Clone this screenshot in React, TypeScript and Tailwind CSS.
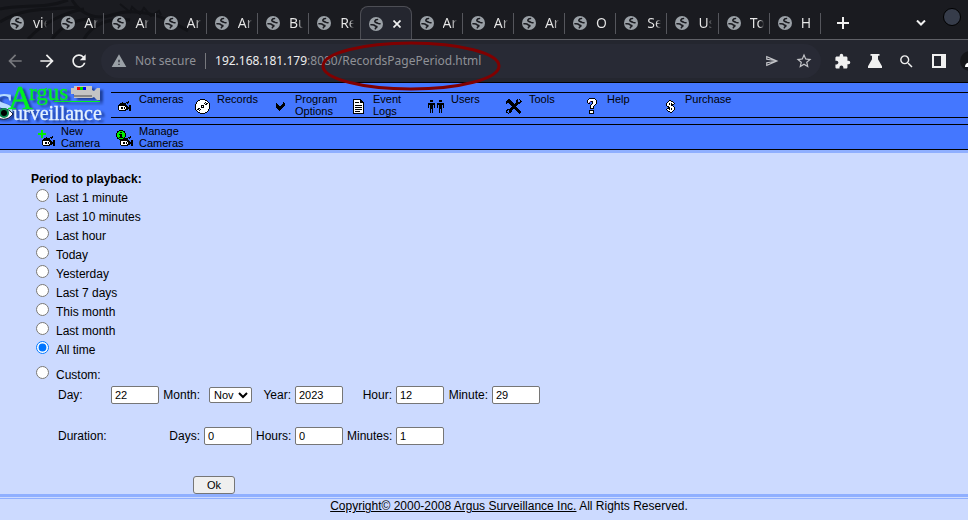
import { useState, type ReactNode } from "react";
import {
  MdArrowBack,
  MdArrowForward,
  MdExtension,
  MdOutlineSend,
  MdRefresh,
  MdSearch,
  MdStarBorder,
  MdWarning,
} from "react-icons/md";

const tabs = ["vie", "Ar", "Ar", "Ar", "Ar", "Bu", "Re", "", "Ar", "Ar", "Ar", "O", "Se", "Us", "To", "H"];
const activeTab = 7;

function Globe() {
  return (
    <svg viewBox="0 0 14 14" className="size-[14px] shrink-0">
      <circle cx="7" cy="7" r="7" fill="#9aa0a6" />
      <g fill="none" stroke="#1a1b20" strokeLinecap="round" strokeLinejoin="round">
        <path d="M8.500 2.500C5.500 2.500 5 5.200 7.300 5.600c1.300.2 1.500 1.400 3.700 1.200" strokeWidth="1.600" />
        <path d="M2 7.800c2.200-.2 3.400.1 4 .9.500.7 2.300.4 1.800 1.300-.4.700-1.300.6-1.500 1.800" strokeWidth="1.600" />
      </g>
    </svg>
  );
}

function TabStrip() {
  return (
    <div className="relative flex h-10 items-end overflow-hidden border-b border-[#5f6066] bg-[#1a1b20] pl-[2px]">
      <svg viewBox="0 0 330 39" className="absolute left-0 top-0 h-[39px] w-[330px]" fill="none" stroke="#121317">
        <path d="M0 9C22 4 45 9 68 0M0 22C26 6 52 10 78 7M28 39C44 22 66 12 84 9M52 39C62 25 78 18 94 19" strokeWidth="3" />
        <path d="M72 0C82 16 98 20 112 15C134 7 162 14 188 31M84 39C94 22 112 18 130 20" strokeWidth="3" />
        <path d="M120 4l10 8 2-5 8 7 4-6 7 8 8-5 2 4" strokeWidth="2" />
      </svg>
      <div role="tablist" className="relative -mb-px grid h-[34px] min-w-0 flex-1 grid-cols-[repeat(16,minmax(0,1fr))]">
        {tabs.map((title, i) =>
          i === activeTab ? (
            <div
              key={i}
              role="tab"
              aria-selected="true"
              className="flex items-center justify-between rounded-t-lg border border-b-0 border-[#4d4e55] bg-[#24262f] pl-2 pr-[10px]"
            >
              <Globe />
              <button aria-label="Close tab" className="text-[#f0f0f0]">
                <svg viewBox="0 0 8 8" className="size-2" stroke="currentColor" strokeWidth="1.700">
                  <path d="M0.500 0.500l7 7M7.500 0.500l-7 7" />
                </svg>
              </button>
            </div>
          ) : (
            <div key={i} role="tab" aria-selected="false" className="flex items-center">
              <div className="flex h-[21px] min-w-0 flex-1 items-center pl-2">
                <Globe />
                <span className="ml-[9px] w-[14px] overflow-hidden whitespace-nowrap bg-linear-to-r from-[#e8e8e8] from-65% to-transparent bg-clip-text text-sm leading-5 text-transparent">
                  {title}
                </span>
              </div>
              <div className={i === activeTab - 1 ? "w-px" : "h-[21px] w-px bg-[#55565c]"} />
            </div>
          ),
        )}
      </div>
      <div className="relative flex h-full w-[147px] items-center text-[#f0f0f0]">
        <button aria-label="New tab" className="mt-[7px] ml-4">
          <svg viewBox="0 0 12 12" className="size-3" stroke="currentColor" strokeWidth="2">
            <path d="M6 0v12M0 6h12" />
          </svg>
        </button>
        <button aria-label="Search tabs" className="mt-[7px] ml-[67px]">
          <svg viewBox="0 0 10 6" className="h-[6px] w-[10px]" fill="none" stroke="currentColor" strokeWidth="2">
            <path d="M1 0.500l4 4 4-4" />
          </svg>
        </button>
        <button
          aria-label="Window menu"
          className="mb-[6px] ml-[17px] size-[18px] rounded-full border border-black bg-[#363c4a]"
        />
      </div>
    </div>
  );
}

function Toolbar() {
  return (
    <div className="flex h-[42px] items-center overflow-hidden bg-[#24262f] pl-[5px] text-[#f0f0f0]">
      <button aria-label="Back" className="text-[#77787d]">
        <MdArrowBack size={20} />
      </button>
      <button aria-label="Forward" className="ml-3">
        <MdArrowForward size={20} />
      </button>
      <button aria-label="Reload" className="ml-3">
        <MdRefresh size={20} />
      </button>
      <div className="ml-3 flex h-[34px] min-w-0 flex-1 items-center rounded-full bg-[#282a35] pl-[10px] pr-2 text-xs text-[#8f9197]">
        <MdWarning size={16} className="shrink-0 text-[#9aa0a6]" />
        <span className="ml-2 whitespace-nowrap">Not secure</span>
        <span className="mx-[9px] h-4 w-px shrink-0 bg-[#77787d]" />
        <span className="flex-1 whitespace-nowrap">
          <span className="text-[#eeeeee]">192.168.181.179</span>:8080/RecordsPagePeriod.html
        </span>
        <button aria-label="Share" className="text-[#c4c5c9]">
          <MdOutlineSend size={14} />
        </button>
        <button aria-label="Bookmark" className="ml-4 text-[#c4c5c9]">
          <MdStarBorder size={18} />
        </button>
      </div>
      <div className="flex w-[147px] shrink-0 items-center">
        <button aria-label="Extensions" className="ml-[13px]">
          <MdExtension size={17} />
        </button>
        <button aria-label="Labs" className="ml-[17px]">
          <svg viewBox="0 0 14 14" className="size-[14px]" fill="currentColor">
            <path d="M2.500 0h9v1.800H10v3.400l4 7V14H0v-1.800l4-7V1.800H2.500z" />
          </svg>
        </button>
        <button aria-label="Find" className="ml-4">
          <MdSearch size={17} />
        </button>
        <button aria-label="Side panel" className="ml-[17px]">
          <svg viewBox="0 0 14 14" className="size-[14px]" fill="currentColor">
            <path fillRule="evenodd" d="M0 0h14v14H0zM2 2v10h7V2z" />
          </svg>
        </button>
        <button aria-label="Profile" className="ml-[14px] size-5 shrink-0 overflow-hidden rounded-full bg-[#15161a]">
          <svg viewBox="0 0 20 20" className="size-5">
            <path d="M5 16c0-4 3-4 5-5l6 5z" fill="#ffffff" />
          </svg>
        </button>
      </div>
    </div>
  );
}

const palette: Record<string, string> = { "#": "#000000", W: "#ffffff", G: "#00f000", P: "#7a2090" };

function PixelIcon({ rows }: { rows: string[] }) {
  const width = Math.max(...rows.map((r) => r.length));
  return (
    <svg
      viewBox={`0 0 ${width} ${rows.length}`}
      width={width}
      height={rows.length}
      shapeRendering="crispEdges"
      className="shrink-0"
    >
      {rows.flatMap((row, y) =>
        [...row].map((c, x) => (palette[c] ? <rect key={`${x}-${y}`} x={x} y={y} width="1" height="1" fill={palette[c]} /> : null)),
      )}
    </svg>
  );
}

const cameraIcon = [
  "..........#..",
  "....#...###..",
  "..######.#...",
  ".#######.....",
  "#########..##",
  "#WWWWWW###.##",
  "#WW##W#W#####",
  "#WW##W#W#####",
  "#WWWWWW###.##",
  ".#######...##",
];
const discIcon = [
  ".....#####.....",
  "...##WWWWW##...",
  "..#WWWWWWWWW#..",
  ".#WWWWWWWW#WW#.",
  ".#WWWWWWW#W##W#",
  "#WWWWWWWWW##WW#",
  "#WWWWW###WWWWW#",
  "#WWWWW#W#WWWWW#",
  "#WWWWW###WWWWW#",
  "#WW##WWWWWWWWW#",
  "#W##W#WWWWWWW#.",
  ".#WW#WWWWWWWW#.",
  "..#WWWWWWWWW#..",
  "...##WWWWW##...",
  ".....#####.....",
];
const checkIcon = [
  ".......#.",
  "#......##",
  "##....###",
  "###..####",
  "########.",
  "#######..",
  ".#####...",
  "..###....",
  "...#.....",
];
const documentIcon = [
  "########...",
  "#WWWWWW##..",
  "#WWWWWW###.",
  "#W####W####",
  "#WWWWWWWWW#",
  "#WWWWWWWWW#",
  "#W#######W#",
  "#WWWWWWWWW#",
  "#W#######W#",
  "#WWWWWWWWW#",
  "#W#######W#",
  "#WWWWWWWWW#",
  "#W#####WWW#",
  "#WWWWWWWWW#",
  "###########",
];
const usersIcon = [
  "..###....###..",
  "..###....###..",
  "..............",
  "#######..#######",
  "#######..#######",
  "#.###.#..#.###.#",
  "#.###.#..#.###.#",
  "#.###.#..#.###.#",
  "..###......###..",
  "..#.#......#.#..",
  "..#.#......#.#..",
  "..#.#......#.#..",
  "..#.#......#.#..",
].map((row, i) => (i < 2 ? "..###......###.." : row));

const toolsIcon = [
  "..##.......#.#..",
  ".####.....##..#.",
  "######....##..##",
  "#######...#####.",
  "#..#####.#####..",
  "....########....",
  ".....######.....",
  "......####......",
  ".....######.....",
  "....########....",
  ".######..####...",
  "##.###....####..",
  "#..###.....####.",
  "##.##.......###.",
  "..#..........#..",
];
const helpIcon = [
  "..######..",
  ".#WWWWWW#.",
  "#WWWWWWWW#",
  "#WWP##WWW#",
  "#WP..#WWW#",
  ".##..#WWW#",
  "....#WWW#.",
  "...#WWW#..",
  "...#WW#...",
  "...#WW#...",
  "...####...",
  "..........",
  "..#####...",
  "..#WWW#...",
  "..#WWW#...",
  "..#####...",
];
const dollarIcon = [
  "...##....",
  "..#WW##..",
  ".#WWWWW#.",
  "#WW#W#WW#",
  "#WW#W###.",
  "#WWWW##..",
  ".##WWWW#.",
  "..##WWWW#",
  ".###W#WW#",
  "#WW#W#WW#",
  ".#WWWWW#.",
  "..##WW#..",
  "....##...",
];
const newCameraIcon = [
  "...GG............",
  "...GG............",
  "...GG............",
  "GGGGGGGG.........",
  "GGGGGGGG.........",
  "...GG............",
  "...GG.........#..",
  "...GG...#...###..",
  "......######.#...",
  ".....#######.....",
  "....#########..##",
  "....#WWWWWW###.##",
  "....#WW##W#W#####",
  "....#WW##W#W#####",
  "....#WWWWWW###.##",
  ".....#######...##",
];
const manageCameraIcon = [
  "...####..........",
  ".##GGGG##........",
  ".#GG##GG#........",
  "#GGGGGGGG#.......",
  "#GG###GGG#.......",
  "#GGG##GGG#.......",
  "#GGG##GGG#....#..",
  ".#G####G#...###..",
  ".##GGGG#####.#...",
  "...#########.....",
  "....#########..##",
  "....#WWWWWW###.##",
  "....#WW##W#W#####",
  "....#WW##W#W#####",
  "....#WWWWWW###.##",
  ".....#######...##",
];

function NavItem({ icon, label }: { icon: string[]; label: string }) {
  return (
    <li className="w-[78px]">
      <a href="#" className="flex h-6 text-[11px] leading-3 text-black">
        <span className="flex w-7 shrink-0 items-center justify-center pt-0.5 pr-0.5">
          <PixelIcon rows={icon} />
        </span>
        <span className="w-[50px]">{label}</span>
      </a>
    </li>
  );
}

function Logo() {
  return (
    <svg viewBox="0 0 111 41" className="h-[41px] w-[111px] shrink-0 font-['Liberation_Serif',serif]" role="img" aria-label="Argus Surveillance">
      <g className="drop-shadow-[3px_2px_1px_#1d3f9c]">
        <text x="-7" y="36" fontSize="38" fontWeight="bold" fill="#b8dcff">S</text>
        <text x="8" y="26" fontSize="34" fill="#00f020" stroke="#00f020" strokeWidth="0.500">A</text>
        <text x="29" y="17" fontSize="23" fill="#00f020" stroke="#00f020" strokeWidth="0.300">rgus</text>
        <path d="M54 18.500h46" stroke="#00f020" />
        <text x="13" y="37" fontSize="20" fill="#e4f2ff" stroke="#e4f2ff" strokeWidth="0.300">urveillance</text>
        <path d="M71 5h3V3h18v4l2 1 3-3h3v12h-3l-3-3-2 1H74v-4h-3z" fill="#c4c4c4" />
      </g>
      <path d="M-6 31C-1 24 8 24 13 31C8 38-1 38-6 31z" fill="#ffffff" stroke="#0a1030" />
      <circle cx="4" cy="30" r="5" fill="#0b8a50" />
      <circle cx="4" cy="30" r="3" fill="#000000" />
      <path d="M74 12h18v2H74z" fill="#858585" />
      <path d="M77 4h3v3h-3z" fill="#ff0000" />
      <path d="M80 4h3v3h-3z" fill="#00e000" />
      <path d="M83 4h3v3h-3z" fill="#0000ff" />
    </svg>
  );
}

const mainNav = [
  { label: "Cameras", icon: cameraIcon },
  { label: "Records", icon: discIcon },
  { label: "Program Options", icon: checkIcon },
  { label: "Event Logs", icon: documentIcon },
  { label: "Users", icon: usersIcon },
  { label: "Tools", icon: toolsIcon },
  { label: "Help", icon: helpIcon },
  { label: "Purchase", icon: dollarIcon },
];

function Header() {
  return (
    <header className="border-t border-black bg-[#4477ff]">
      <div className="flex">
        <Logo />
        <nav className="mt-[9px] mb-[6px] flex-1 border-y border-black">
          <ul className="flex">
            {mainNav.map((item) => (
              <NavItem key={item.label} {...item} />
            ))}
          </ul>
        </nav>
      </div>
      <nav className="border-y border-black pl-[33px]">
        <ul className="flex">
          <NavItem icon={newCameraIcon} label="New Camera" />
          <NavItem icon={manageCameraIcon} label="Manage Cameras" />
        </ul>
      </nav>
    </header>
  );
}

const periods = [
  "Last 1 minute",
  "Last 10 minutes",
  "Last hour",
  "Today",
  "Yesterday",
  "Last 7 days",
  "This month",
  "Last month",
  "All time",
  "Custom:",
];

function NumberField({ id, value }: { id: string; value: string }) {
  return (
    <input
      id={id}
      type="text"
      defaultValue={value}
      className="h-[18px] w-12 rounded-[2px] border border-[#767676] bg-white px-[3px] text-[11px] leading-4 text-black"
    />
  );
}

function FieldLabel({ id, children }: { id: string; children: ReactNode }) {
  return (
    <label htmlFor={id} className="whitespace-nowrap text-right">
      {children}
    </label>
  );
}

function PeriodForm() {
  const [period, setPeriod] = useState("All time");
  return (
    <form className="pt-[17px] text-xs leading-[19px]" onSubmit={(e) => e.preventDefault()}>
      <fieldset>
        <legend className="pl-[31px] font-bold">Period to playback:</legend>
        {periods.map((p) => (
          <label key={p} className="flex pl-9 last:mt-[6px]">
            <input
              type="radio"
              name="period"
              checked={period === p}
              onChange={() => setPeriod(p)}
              className="mr-[7px] size-[13px]"
            />
            {p}
          </label>
        ))}
      </fieldset>
      <div className="mt-px ml-[58px] grid grid-cols-[49px_48px_37px_48px_35px_48px_45px_48px_40px_48px] gap-x-1 leading-[18px]">
        <label htmlFor="day">Day:</label>
        <NumberField id="day" value="22" />
        <FieldLabel id="month">Month:</FieldLabel>
        <select
          id="month"
          defaultValue="Nov"
          className="h-4 w-[43px] self-center justify-self-end rounded-[2px] border border-[#767676] bg-white text-[11px] leading-3 text-black"
        >
          {["Jan", "Feb", "Mar", "Apr", "May", "Jun", "Jul", "Aug", "Sep", "Oct", "Nov", "Dec"].map((m) => (
            <option key={m}>{m}</option>
          ))}
        </select>
        <FieldLabel id="year">Year:</FieldLabel>
        <NumberField id="year" value="2023" />
        <FieldLabel id="hour">Hour:</FieldLabel>
        <NumberField id="hour" value="12" />
        <FieldLabel id="minute">Minute:</FieldLabel>
        <NumberField id="minute" value="29" />
      </div>
      <div className="mt-[23px] ml-[58px] grid grid-cols-[49px_48px_37px_48px_35px_48px_45px_48px] gap-x-1 leading-[18px]">
        <span className="col-span-2">Duration:</span>
        <FieldLabel id="days">Days:</FieldLabel>
        <NumberField id="days" value="0" />
        <FieldLabel id="hours">Hours:</FieldLabel>
        <NumberField id="hours" value="0" />
        <FieldLabel id="minutes">Minutes:</FieldLabel>
        <NumberField id="minutes" value="1" />
      </div>
      <button
        type="submit"
        className="mt-[31px] ml-[193px] block h-[18px] w-[42px] rounded-[3px] border border-[#767676] bg-[#efefef] text-[11px] leading-4 text-black"
      >
        Ok
      </button>
    </form>
  );
}

export default function App() {
  return (
    <div className="relative min-h-screen overflow-hidden bg-[#ccdaff] font-['Liberation_Sans',Arial,sans-serif] text-black">
      <div className="font-['Noto_Sans',sans-serif]">
        <TabStrip />
        <Toolbar />
      </div>
      <Header />
      <main className="border-y-[3px] border-[#8fafff]">
        <PeriodForm />
      </main>
      <footer className="mt-px border-t border-[#8fafff] pl-[50px] text-center text-xs leading-[14px]">
        <a href="#" className="underline">
          Copyright© 2000-2008 Argus Surveillance Inc.
        </a>{" "}
        All Rights Reserved.
      </footer>
      <svg viewBox="0 0 180 50" className="pointer-events-none absolute left-[321px] top-[41px] h-[50px] w-[180px]" fill="none">
        <ellipse cx="90" cy="25" rx="88" ry="23" stroke="#800000" strokeWidth="3" />
      </svg>
    </div>
  );
}
